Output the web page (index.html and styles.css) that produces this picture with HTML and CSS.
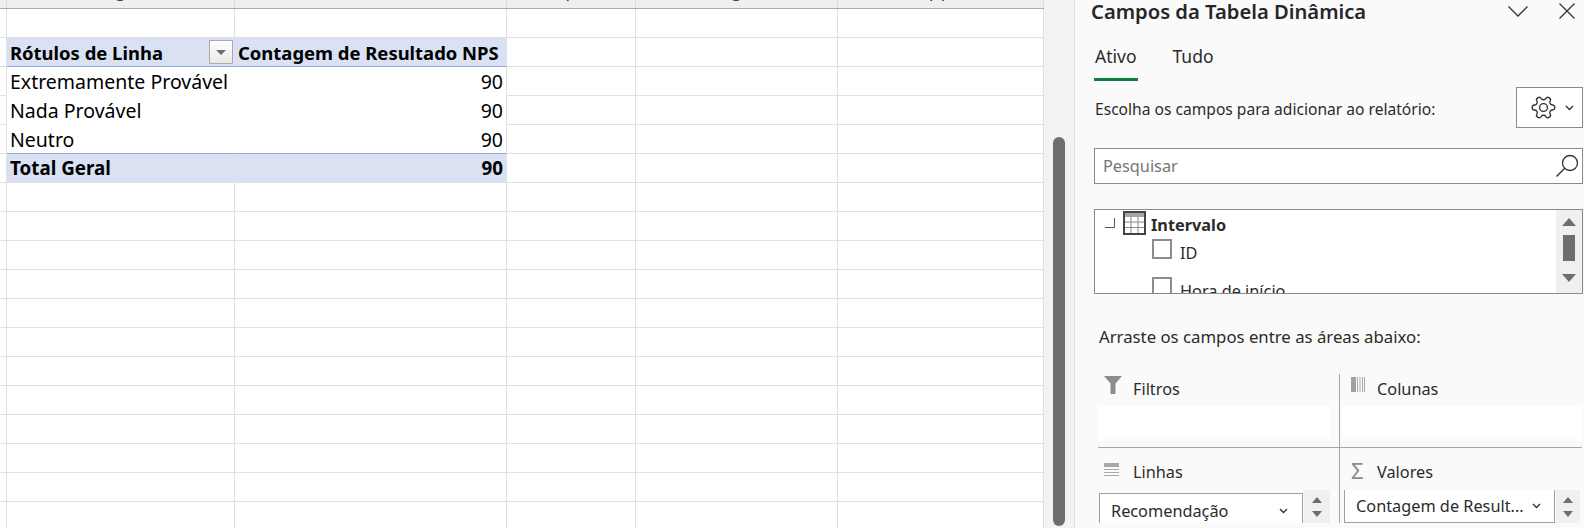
FILE: index.html
```html
<!DOCTYPE html>
<html lang="pt-BR">
<head>
  <meta charset="UTF-8">
  <title>Campos da Tabela Dinâmica</title>
  <link rel="stylesheet" href="styles.css">
</head>
<body>
  <div class="sheet">
    <div class="col-heads">
      <div class="col-head gutter"></div>
      <div class="col-head b"><span>g</span></div>
      <div class="col-head c"><span>Q</span></div>
      <div class="col-head d"><span>p</span></div>
      <div class="col-head e"><span>g</span></div>
      <div class="col-head f"><span>pp</span></div>
    </div>
    <table class="grid">
      <colgroup>
        <col class="w-gutter"><col class="w-b"><col class="w-c"><col class="w-d"><col class="w-e"><col class="w-f">
      </colgroup>
      <tr><td></td><td></td><td></td><td></td><td></td><td></td></tr>
      <tr class="pivot-head">
        <td></td>
        <td class="label"><div class="head-cell">Rótulos de Linha<span class="filter-btn"><i></i></span></div></td>
        <td class="label">Contagem de Resultado NPS</td>
        <td></td><td></td><td></td>
      </tr>
      <tr class="pivot-row">
        <td></td><td class="label">Extremamente Provável</td><td class="num">90</td><td></td><td></td><td></td>
      </tr>
      <tr class="pivot-row">
        <td></td><td class="label">Nada Provável</td><td class="num">90</td><td></td><td></td><td></td>
      </tr>
      <tr class="pivot-row last">
        <td></td><td class="label">Neutro</td><td class="num">90</td><td></td><td></td><td></td>
      </tr>
      <tr class="pivot-total">
        <td></td><td class="label">Total Geral</td><td class="num">90</td><td></td><td></td><td></td>
      </tr>
      <tr><td></td><td></td><td></td><td></td><td></td><td></td></tr>
      <tr><td></td><td></td><td></td><td></td><td></td><td></td></tr>
      <tr><td></td><td></td><td></td><td></td><td></td><td></td></tr>
      <tr><td></td><td></td><td></td><td></td><td></td><td></td></tr>
      <tr><td></td><td></td><td></td><td></td><td></td><td></td></tr>
      <tr><td></td><td></td><td></td><td></td><td></td><td></td></tr>
      <tr><td></td><td></td><td></td><td></td><td></td><td></td></tr>
      <tr><td></td><td></td><td></td><td></td><td></td><td></td></tr>
      <tr><td></td><td></td><td></td><td></td><td></td><td></td></tr>
      <tr><td></td><td></td><td></td><td></td><td></td><td></td></tr>
      <tr><td></td><td></td><td></td><td></td><td></td><td></td></tr>
      <tr><td></td><td></td><td></td><td></td><td></td><td></td></tr>
    </table>
  </div>

  <div class="sheet-scroll"><div class="sheet-thumb"></div></div>

  <div class="panel">
    <div class="panel-title">
      <h1>Campos da Tabela Dinâmica</h1>
      <svg class="icon-chevron" width="20" height="11" viewBox="0 0 20 11"><path d="M.5.5 10 10 19.500.5" fill="none" stroke="#333" stroke-width="1.300"/></svg>
      <svg class="icon-close" width="16" height="16" viewBox="0 0 16 16"><path d="M.5.500l15 15M15.500.5l-15 15" fill="none" stroke="#333" stroke-width="1.300"/></svg>
    </div>

    <div class="tabs">
      <div class="tab active">Ativo</div>
      <div class="tab">Tudo</div>
    </div>

    <div class="choose-row">
      <span class="choose-text">Escolha os campos para adicionar ao relatório:</span>
      <div class="gear-btn">
        <svg width="27" height="27" viewBox="0 0 24 24"><g transform="rotate(90 12 12)" fill="none" stroke="#333" stroke-width="1.200"><path d="M12.220 2h-.44a2 2 0 0 0-2 2v.18a2 2 0 0 1-1 1.730l-.43.25a2 2 0 0 1-2 0l-.15-.08a2 2 0 0 0-2.730.73l-.22.38a2 2 0 0 0 .73 2.730l.15.1a2 2 0 0 1 1 1.720v.51a2 2 0 0 1-1 1.740l-.15.09a2 2 0 0 0-.73 2.730l.22.38a2 2 0 0 0 2.730.73l.15-.08a2 2 0 0 1 2 0l.43.25a2 2 0 0 1 1 1.730V20a2 2 0 0 0 2 2h.44a2 2 0 0 0 2-2v-.18a2 2 0 0 1 1-1.730l.43-.25a2 2 0 0 1 2 0l.15.08a2 2 0 0 0 2.730-.73l.22-.39a2 2 0 0 0-.73-2.730l-.15-.08a2 2 0 0 1-1-1.740v-.5a2 2 0 0 1 1-1.740l.15-.09a2 2 0 0 0 .73-2.730l-.22-.38a2 2 0 0 0-2.730-.73l-.15.08a2 2 0 0 1-2 0l-.43-.25a2 2 0 0 1-1-1.730V4a2 2 0 0 0-2-2z"/><circle cx="12" cy="12" r="3.500"/></g></svg>
        <svg width="9" height="6" viewBox="0 0 9 6"><path d="M1 1l3.500 3.500L8 1" fill="none" stroke="#333" stroke-width="1.400"/></svg>
      </div>
    </div>

    <div class="search">
      <span class="placeholder">Pesquisar</span>
      <svg width="28" height="28" viewBox="0 0 28 28"><circle cx="17" cy="11" r="7.500" fill="none" stroke="#333" stroke-width="1.300"/><path d="M11.500 16.500 3.500 24.500" stroke="#333" stroke-width="1.400"/></svg>
    </div>

    <div class="field-list">
      <div class="tree">
        <div class="tree-root">
          <svg class="tree-corner" width="10" height="10" viewBox="0 0 10 10"><path d="M9.500 0v9.500H0" fill="none" stroke="#555" stroke-width="1"/></svg>
          <svg class="table-icon" width="23" height="24" viewBox="0 0 23 24">
            <rect x="1" y="1" width="21" height="22" fill="#fff" stroke="#444" stroke-width="2"/>
            <rect x="2" y="2" width="19" height="4" fill="#a6a6a6"/>
            <path d="M8 6v16M15 6v16M2 11h19M2 16.500h19" stroke="#8a8a8a" stroke-width="1"/>
          </svg>
          <strong>Intervalo</strong>
        </div>
        <div class="field"><span class="check"></span><span class="field-name">ID</span></div>
        <div class="field second"><span class="check"></span><span class="field-name">Hora de início</span></div>
      </div>
      <div class="list-scroll">
        <i class="tri up"></i>
        <div class="list-thumb"></div>
        <i class="tri down"></i>
      </div>
    </div>

    <div class="drag-text">Arraste os campos entre as áreas abaixo:</div>

    <div class="areas">
      <div class="area left top">
        <div class="area-label">
          <span class="area-icon"><svg width="18" height="18" viewBox="0 0 18 18"><path d="M0 0h18l-6.500 7.500V18h-5V7.500z" fill="#8c8c8c"/></svg></span>
          Filtros
        </div>
        <div class="drop-box"></div>
      </div>
      <div class="area right top">
        <div class="area-label">
          <span class="area-icon"><svg width="14" height="15" viewBox="0 0 14 15"><path d="M0 0h5v15H0z" fill="#a0a0a0"/><path d="M6.500 0v15M9 0v15M11.500 0v15M13.500 0v15" stroke="#a8a8a8" stroke-width="1"/></svg></span>
          Colunas
        </div>
        <div class="drop-box"></div>
      </div>
      <div class="area left bottom">
        <div class="area-label">
          <span class="area-icon"><svg width="15" height="13" viewBox="0 0 15 13"><path d="M0 0h15v4H0z" fill="#a8a8a8"/><path d="M0 6.500h15M0 9.500h15M0 12.500h15" stroke="#a8a8a8" stroke-width="1"/></svg></span>
          Linhas
        </div>
        <div class="pick-row lines">
          <div class="pick">
            <span>Recomendação</span>
            <svg width="9" height="6" viewBox="0 0 9 6"><path d="M1 1l3.500 3.500L8 1" fill="none" stroke="#333" stroke-width="1.400"/></svg>
          </div>
          <div class="spin"><i class="tri up small"></i><i class="tri down small"></i></div>
        </div>
      </div>
      <div class="area right bottom">
        <div class="area-label">
          <span class="area-icon sigma">Σ</span>
          Valores
        </div>
        <div class="pick-row values">
          <div class="pick">
            <span>Contagem de Result...</span>
            <svg width="9" height="6" viewBox="0 0 9 6"><path d="M1 1l3.500 3.500L8 1" fill="none" stroke="#333" stroke-width="1.400"/></svg>
          </div>
          <div class="spin"><i class="tri up small"></i><i class="tri down small"></i></div>
        </div>
      </div>
    </div>
  </div>
</body>
</html>
```

FILE: styles.css
```css
html, body {
  height: 528px;
  overflow: hidden;
}

body {
  margin: 0;
  display: flex;
  background-color: #ffffff;
  font-family: "Noto Sans", "Open Sans", Arial, sans-serif;
  color: #2b2b2b;
}

/* Planilha */
.sheet {
  width: 1044px;
  flex: none;
  overflow: hidden;
}

.col-heads {
  display: flex;
  height: 8px;
  background-color: #efefef;
  border-bottom: 1px solid #ababab;
}

.col-head {
  height: 8px;
  flex: none;
  overflow: hidden;
  text-align: center;
  border-right: 1px solid #dcdcdc;
  box-sizing: border-box;
  font-size: 19px;
  color: #444;
}

.col-head span {
  display: block;
  margin-top: -23px;
  line-height: 24px;
}

.col-head.gutter { width: 7px; }
.col-head.b { width: 228px; }
.col-head.c { width: 272px; }
.col-head.d { width: 129px; }
.col-head.e { width: 202px; }
.col-head.f { width: 206px; }

.grid {
  table-layout: fixed;
  border-collapse: separate;
  border-spacing: 0;
  width: 1044px;
  font-size: 19.500px;
  color: #000;
}

.w-gutter { width: 7px; }
.w-b { width: 228px; }
.w-c { width: 272px; }
.w-d { width: 129px; }
.w-e { width: 202px; }
.w-f { width: 206px; }

.grid td {
  height: 29px;
  box-sizing: border-box;
  padding: 0;
  border-right: 1px solid #e0e0e0;
  border-bottom: 1px solid #e0e0e0;
  white-space: nowrap;
}

.grid td.label { padding-left: 3px; overflow: visible; }
.grid td.num { padding-right: 3px; text-align: right; }

.pivot-head td:first-child { border-right-color: #d9e1f2; }
.pivot-head td:nth-child(2),
.pivot-head td:nth-child(3) {
  background-color: #d9e1f2;
  font-size: 18.450px;
  font-weight: 700;
  border-bottom-color: #8ea9db;
  border-right-color: #d9e1f2;
}

.head-cell {
  display: flex;
  align-items: center;
  justify-content: space-between;
}

.filter-btn {
  width: 24px;
  height: 24px;
  box-sizing: border-box;
  display: flex;
  align-items: center;
  justify-content: center;
  background: linear-gradient(#ffffff, #e9e9e9);
  border: 1px solid #ababab;
  margin-right: 1px;
}

.filter-btn i {
  width: 0;
  height: 0;
  border-left: 5px solid transparent;
  border-right: 5px solid transparent;
  border-top: 5px solid #6e6e6e;
}

.pivot-row td:nth-child(2),
.pivot-row td:nth-child(3) {
  border-right-color: #ffffff;
  border-bottom-color: #ffffff;
}

.pivot-row td:nth-child(3) { border-right-color: #e0e0e0; }

.pivot-row.last td:nth-child(2),
.pivot-row.last td:nth-child(3) { border-bottom-color: #8ea9db; }

.pivot-total td:nth-child(2),
.pivot-total td:nth-child(3) {
  background-color: #d9e1f2;
  font-size: 18.800px;
  font-weight: 700;
  border-right-color: #d9e1f2;
}

/* Barra de rolagem da planilha */
.sheet-scroll {
  width: 30px;
  flex: none;
  padding: 137px 0 0 9px;
  box-sizing: border-box;
  background-color: #f3f3f3;
}

.sheet-thumb {
  width: 12px;
  height: 389px;
  border-radius: 6px;
  background-color: #6e6e6e;
}

/* Painel de campos */
.panel {
  flex: 1;
  min-width: 0;
  height: 528px;
  overflow: hidden;
  background-color: #fafafa;
  border-left: 1px solid #dcdcdc;
  font-size: 16.300px;
}

.panel-title {
  display: flex;
  align-items: center;
  height: 24px;
  box-sizing: border-box;
  padding: 0 0 2px 16px;
}

.panel-title h1 {
  flex: 1;
  margin: 0;
  font-size: 20.200px;
  font-weight: 600;
  color: #262626;
}

.icon-chevron { margin-right: 31px; }
.icon-close { margin-right: 9px; }

.tabs {
  display: flex;
  gap: 34px;
  margin: 12px 0 0 19px;
}

.tab {
  height: 45px;
  line-height: 40px;
  box-sizing: border-box;
  padding: 0 1px;
  font-size: 17.500px;
}

.tab.active { border-bottom: 3px solid #107c41; }

.choose-row {
  display: flex;
  align-items: center;
  justify-content: space-between;
  height: 41px;
  margin: 6px 1px 0 20px;
}

.choose-text {
  padding-top: 3px;
  font-size: 15.600px;
}

.gear-btn {
  width: 67px;
  height: 41px;
  box-sizing: border-box;
  display: flex;
  align-items: center;
  justify-content: center;
  gap: 8px;
  padding-left: 4px;
  background-color: #ffffff;
  border: 1px solid #8a8a8a;
}

.search {
  display: flex;
  align-items: center;
  justify-content: space-between;
  height: 36px;
  box-sizing: border-box;
  margin: 20px 1px 0 19px;
  padding: 0 1px 0 8px;
  background-color: #ffffff;
  border: 1px solid #8a8a8a;
}

.placeholder { color: #757575; }

.field-list {
  display: flex;
  height: 85px;
  box-sizing: border-box;
  margin: 25px 1px 0 19px;
  overflow: hidden;
  background-color: #ffffff;
  border: 1px solid #8a8a8a;
}

.tree {
  flex: 1;
  padding-top: 1px;
}

.tree-root {
  display: flex;
  align-items: center;
  height: 24px;
  padding-left: 10px;
}

.tree-corner { margin-right: 8px; }
.table-icon { margin-right: 5px; }

.tree-root strong {
  font-weight: 700;
  padding-top: 4px;
}

.field {
  display: flex;
  height: 20px;
  margin-top: 4px;
  padding-left: 57px;
}

.field.second { margin-top: 18px; }

.check {
  width: 20px;
  height: 20px;
  box-sizing: border-box;
  background-color: #ffffff;
  border: 2px solid #8c8c8c;
}

.field-name {
  margin-left: 8px;
  padding-top: 3px;
  white-space: nowrap;
}

.list-scroll {
  width: 26px;
  display: flex;
  flex-direction: column;
  align-items: center;
  background-color: #f0f0f0;
  padding-top: 8px;
}

.list-thumb {
  width: 12px;
  height: 26px;
  margin: 9px 0 13px;
  background-color: #6e6e6e;
}

.tri {
  width: 0;
  height: 0;
  border-left: 7px solid transparent;
  border-right: 7px solid transparent;
}

.tri.up { border-bottom: 8px solid #6e6e6e; }
.tri.down { border-top: 8px solid #6e6e6e; }

.tri.small {
  border-left-width: 5px;
  border-right-width: 5px;
}

.tri.up.small { border-bottom-width: 6px; }
.tri.down.small { border-top-width: 6px; }

.drag-text {
  height: 20px;
  line-height: 20px;
  margin: 33px 0 0 24px;
  font-size: 16.750px;
}

.areas {
  display: grid;
  grid-template-columns: 241px 243px;
  grid-template-rows: 74px 75px;
  margin: 27px 0 0 23px;
}

.area { box-sizing: border-box; overflow: hidden; }

.area.left { padding-right: 9px; }
.area.right { border-left: 1px solid #a6a6a6; padding-left: 3px; }
.area.top { border-bottom: 1px solid #a6a6a6; }

.area-label {
  display: flex;
  align-items: center;
  height: 32px;
  box-sizing: border-box;
  padding: 0 0 3px 6px;
  white-space: nowrap;
}

.area.right .area-label { padding-left: 8px; }

.area.bottom .area-label {
  height: 42px;
  padding-top: 6px;
  padding-bottom: 0;
}

.area-icon {
  display: flex;
  width: 29px;
  flex: none;
}

.area.left.top .area-icon svg { margin-bottom: 7px; }
.area.left.bottom .area-icon svg { margin-bottom: 6px; }
.area.right .area-icon { width: 26px; }
.area.right.top .area-icon svg { margin-bottom: 9px; }

.sigma {
  font-size: 22px;
  line-height: 22px;
  color: #8c8c8c;
  margin-bottom: 5px;
}

.drop-box {
  height: 33px;
  background-color: #ffffff;
}

.pick-row { display: flex; height: 33px; }

.pick {
  display: flex;
  align-items: center;
  justify-content: space-between;
  box-sizing: border-box;
  background-color: #ffffff;
  border: 1px solid #a0a0a0;
  white-space: nowrap;
}

.pick-row.lines .pick {
  width: 205px;
  height: 40px;
  margin: 3px 0 0 1px;
  padding: 0 14px 4px 11px;
}

.pick-row.values .pick {
  width: 211px;
  height: 33px;
  margin-left: 1px;
  padding: 0 13px 0 11px;
  border-top: none;
}

.spin {
  display: flex;
  flex-direction: column;
  align-items: center;
  justify-content: center;
  gap: 8px;
  height: 33px;
  margin-left: 1px;
  background-color: #f0f0f0;
}

.pick-row.lines .spin { width: 26px; }
.pick-row.values .spin { width: 24px; }
```
